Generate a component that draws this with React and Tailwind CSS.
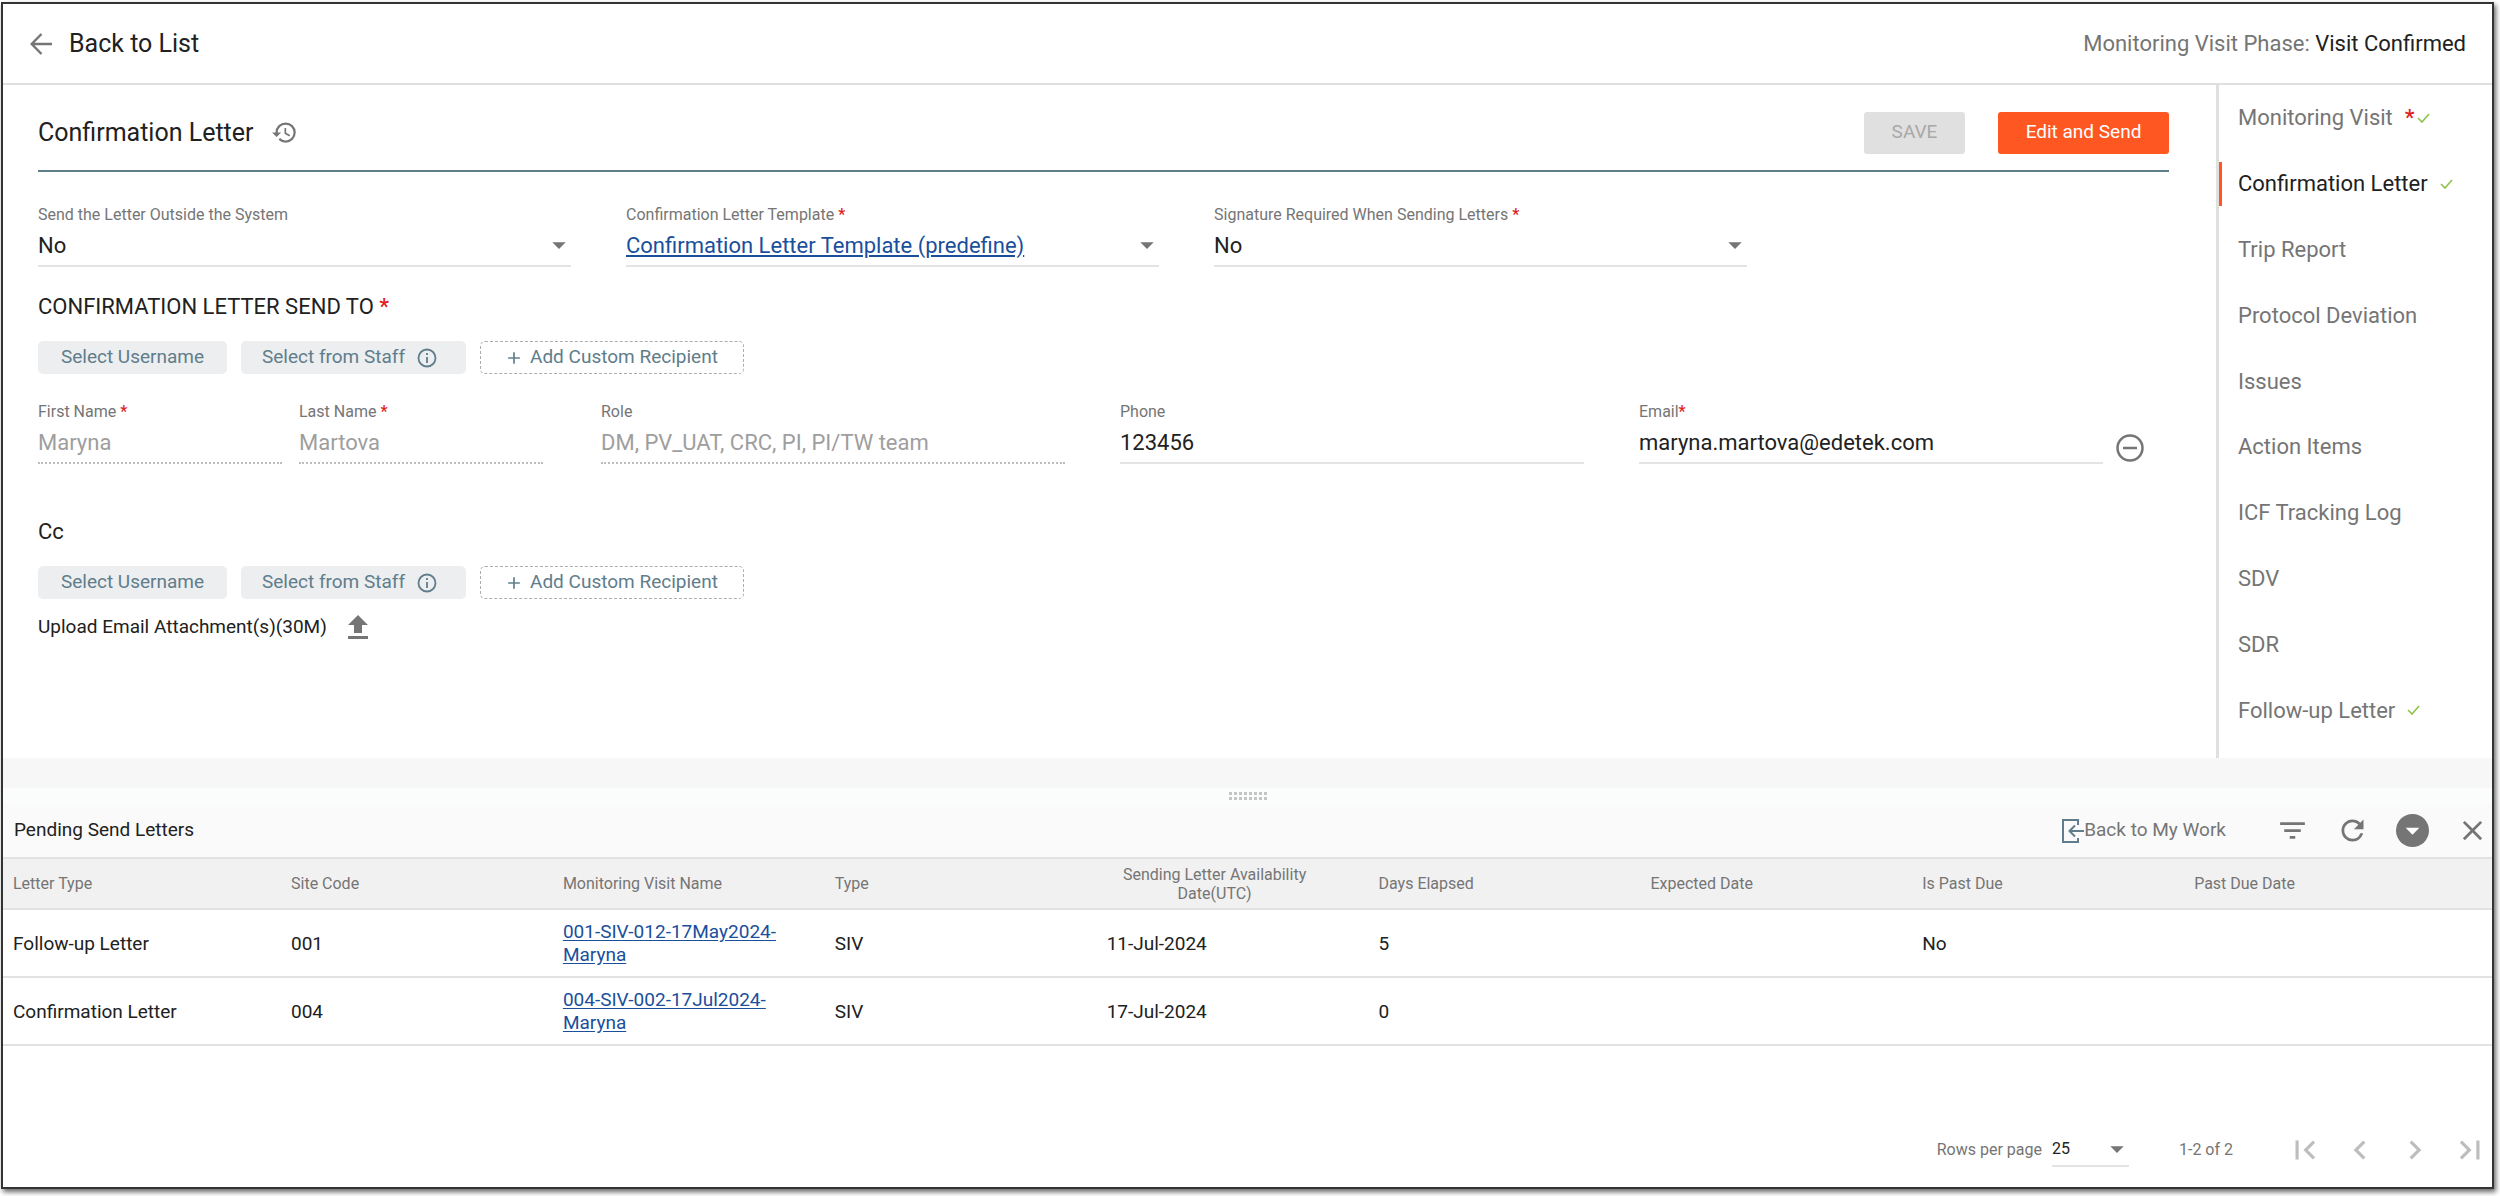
import { MdHistory, MdFilterList, MdRefresh, MdClose, MdFirstPage, MdLastPage, MdChevronLeft, MdChevronRight, MdArrowDropDown, MdAdd } from "react-icons/md";

const steps = [
  { name: "Monitoring Visit", required: true, done: true },
  { name: "Confirmation Letter", active: true, done: true },
  { name: "Trip Report" },
  { name: "Protocol Deviation" },
  { name: "Issues" },
  { name: "Action Items" },
  { name: "ICF Tracking Log" },
  { name: "SDV" },
  { name: "SDR" },
  { name: "Follow-up Letter", done: true },
];

const rows = [
  { type: "Follow-up Letter", site: "001", visit: "001-SIV-012-17May2024-Maryna", kind: "SIV", date: "11-Jul-2024", days: "5", expected: "", past: "No" },
  { type: "Confirmation Letter", site: "004", visit: "004-SIV-002-17Jul2024-Maryna", kind: "SIV", date: "17-Jul-2024", days: "0", expected: "", past: "" },
];

const headers = ["Letter Type", "Site Code", "Monitoring Visit Name", "Type", "Sending Letter Availability Date(UTC)", "Days Elapsed", "Expected Date", "Is Past Due", "Past Due Date"];

function Star() {
  return <span className="font-medium text-[#e02020]">*</span>;
}

function Check() {
  return (
    <svg viewBox="0 0 13 10" className="h-[10px] w-[13px]" fill="none" stroke="#8bc34a" strokeWidth="1.600" aria-hidden="true">
      <path d="M1 5l4 4L12 1" />
    </svg>
  );
}

function BackArrow() {
  return (
    <svg viewBox="0 0 22 22" className="size-[22px]" fill="none" stroke="#757575" strokeWidth="2.400" aria-hidden="true">
      <path d="M22 11H2M11.500 1L1.700 11l9.800 10" />
    </svg>
  );
}

function InfoIcon() {
  return (
    <svg viewBox="0 0 20 20" className="size-5" fill="none" stroke="currentColor" strokeWidth="1.800" aria-hidden="true">
      <circle cx="10" cy="10" r="8.500" />
      <path d="M10 9v6M10 5v2" />
    </svg>
  );
}

function SelectField({ id, label, required, value, link }) {
  return (
    <div>
      <label htmlFor={id} className="block text-[16px] leading-6 text-[#757575]">
        {label} {required && <Star />}
      </label>
      <div className="relative border-b-2 border-[#e4e4e4]">
        <select
          id={id}
          defaultValue={value}
          className={
            "h-[38px] w-full appearance-none bg-transparent pr-8 pb-0.5 text-[22px] outline-none " +
            (link ? "text-[#1a4f9c] underline underline-offset-2" : "text-[#212121]")
          }
        >
          <option>{value}</option>
        </select>
        <MdArrowDropDown className="pointer-events-none absolute top-0.5 -right-1 size-8 text-[#757575]" />
      </div>
    </div>
  );
}

function TextField({ id, label, star, value, disabled, className }) {
  return (
    <div className={className}>
      <label htmlFor={id} className="block text-[16px] leading-6 text-[#757575]">
        {label}
        {star}
      </label>
      <input
        id={id}
        defaultValue={value}
        disabled={disabled}
        className={
          "h-10 w-full border-b-2 bg-transparent pb-0.5 text-[22px] outline-none " +
          (disabled ? "border-dotted border-[#bdbdbd] text-[#9e9e9e]" : "border-[#e4e4e4] text-[#212121]")
        }
      />
    </div>
  );
}

function RecipientButtons() {
  return (
    <div className="flex items-center gap-[14px] text-[19px] text-[#607d8b]">
      <button className="h-[33px] w-[189px] rounded-[5px] bg-[#eceef0]">Select Username</button>
      <button className="flex h-[33px] w-[225px] items-center gap-3 rounded-[5px] bg-[#eceef0] pl-[21px]">
        Select from Staff <InfoIcon />
      </button>
      <button className="flex h-[33px] w-[264px] items-center gap-1.5 rounded-[5px] border border-dashed border-[#adadad] pl-[23px]">
        <MdAdd className="size-5" /> Add Custom Recipient
      </button>
    </div>
  );
}

function Header() {
  return (
    <header className="flex h-[81px] items-center justify-between border-b-2 border-[#e0e0e0] pr-[26px] pl-[27px]">
      <a href="#list" className="flex items-center gap-[17px] text-[25px]">
        <BackArrow /> Back to List
      </a>
      <p className="text-[22px] text-[#757575]">
        Monitoring Visit Phase: <span className="text-[#212121]">Visit Confirmed</span>
      </p>
    </header>
  );
}

function LetterForm() {
  return (
    <main className="flex-1 pr-[47px] pl-[35px]">
      <div className="flex h-[87px] items-center border-b-2 border-[#607d8b] pt-2.5">
        <h1 className="text-[25px]">Confirmation Letter</h1>
        <button aria-label="History" className="ml-[17px]">
          <MdHistory className="size-[27px] text-[#757575]" />
        </button>
        <button disabled className="ml-auto h-[42px] w-[101px] rounded-[3px] bg-[#e0e0e0] text-[19px] text-[#a8a8a8]">SAVE</button>
        <button className="ml-[33px] h-[42px] w-[171px] rounded-[3px] bg-[#ff5722] text-[19px] text-white">Edit and Send</button>
      </div>

      <div className="mt-[31px] mr-[422px] grid grid-cols-3 gap-[55px]">
        <SelectField id="outside" label="Send the Letter Outside the System" value="No" />
        <SelectField id="template" label="Confirmation Letter Template" required value="Confirmation Letter Template (predefine)" link />
        <SelectField id="signature" label="Signature Required When Sending Letters" required value="No" />
      </div>

      <h2 className="mt-6 mb-[18px] text-[22px] leading-8">
        CONFIRMATION LETTER SEND TO <Star />
      </h2>
      <RecipientButtons />

      <div className="mt-[26px] flex items-end">
        <TextField id="first" label="First Name " star={<Star />} value="Maryna" disabled className="mr-[17px] w-[244px]" />
        <TextField id="last" label="Last Name " star={<Star />} value="Martova" disabled className="mr-[58px] w-[244px]" />
        <TextField id="role" label="Role" value="DM, PV_UAT, CRC, PI, PI/TW team" disabled className="mr-[55px] flex-1" />
        <TextField id="phone" label="Phone" value="123456" className="mr-[55px] flex-1" />
        <TextField id="email" label="Email" star={<Star />} value="maryna.martova@edetek.com" className="flex-1" />
        <button aria-label="Remove recipient" className="mr-[25px] mb-0.5 ml-[13px]">
          <svg viewBox="0 0 28 28" className="size-7" fill="none" stroke="#757575" strokeWidth="2.500" aria-hidden="true">
            <circle cx="14" cy="14" r="12.500" />
            <path d="M7 14h14" />
          </svg>
        </button>
      </div>

      <h2 className="mt-[52px] mb-[18px] text-[22px] leading-8">Cc</h2>
      <RecipientButtons />
      <div className="mt-3 flex items-center gap-[21px] text-[19px] leading-8">
        Upload Email Attachment(s)(30M)
        <button aria-label="Upload">
          <svg viewBox="0 0 20 24" className="h-6 w-5" fill="#757575" aria-hidden="true">
            <path d="M10 0L20 10h-6v8H6v-8H0zM0 21h20v3H0z" />
          </svg>
        </button>
      </div>
    </main>
  );
}

function StepNav() {
  return (
    <nav className="flex w-[276px] flex-col border-l-3 border-[#e0e0e0] pb-[15px] text-[22px]">
      {steps.map((s) => (
        <a key={s.name} href="#step" className={"flex flex-1 items-center " + (s.active ? "text-[#212121]" : "text-[#757575]")}>
          <span className={"mr-4 h-11 w-[3px] " + (s.active ? "bg-[#ff5722]" : "")} />
          {s.name}
          <span className="ml-3 flex items-center gap-0.5">
            {s.required && <Star />}
            {s.done && <Check />}
          </span>
        </a>
      ))}
    </nav>
  );
}

function PendingLetters() {
  return (
    <section className="flex flex-1 flex-col">
      <div className="h-[30px] bg-[#f7f7f7]" />
      <div className="flex h-4 items-center justify-center bg-[#fbfdfc]">
        <div className="grid grid-cols-8 gap-0.5">
          {Array.from({ length: 16 }, (_, i) => (
            <span key={i} className="size-[3px] bg-[#c4c4c4]" />
          ))}
        </div>
      </div>
      <div className="flex h-[53px] items-center bg-[#fafafa] pr-[3px] pl-[11px]">
        <h2 className="text-[19px]">Pending Send Letters</h2>
        <a href="#work" className="ml-auto flex items-center text-[19px] text-[#757575]">
          <svg viewBox="0 0 22 24" className="h-6 w-[22px]" fill="none" stroke="#607d8b" strokeWidth="2" aria-hidden="true">
            <path d="M16 6V1H1v22h15v-4M22 12H8M13 6.500L7.500 12l5.500 5.500" />
          </svg>
          Back to My Work
        </a>
        <div className="ml-[50px] flex items-center gap-[27px] text-[#757575]">
          <button aria-label="Filter"><MdFilterList className="size-[33px]" /></button>
          <button aria-label="Refresh"><MdRefresh className="size-[33px]" /></button>
          <button aria-label="More" className="rounded-full bg-[#757575] text-white"><MdArrowDropDown className="size-[33px]" /></button>
          <button aria-label="Close"><MdClose className="size-[33px]" /></button>
        </div>
      </div>
      <table className="w-full table-fixed border-t-2 border-[#e2e2e2] text-left">
        <colgroup>
          <col className="w-[278px]" />
          {headers.slice(1).map((h) => <col key={h} />)}
          <col className="w-9" />
        </colgroup>
        <thead>
          <tr className="h-[51px] border-b-2 border-[#e2e2e2] bg-[#f1f1f1] text-[16px] leading-[19px] text-[#757575]">
            {headers.map((h) => (
              <th key={h} className={"pr-[46px] pl-[10px] font-normal " + (h.startsWith("Sending") ? "text-center" : "")}>{h}</th>
            ))}
            <td />
          </tr>
        </thead>
        <tbody>
          {rows.map((r) => (
            <tr key={r.site} className="h-[68px] border-b-2 border-[#e2e2e2] text-[19px] leading-[23px]">
              <td className="pl-[10px]">{r.type}</td>
              <td className="pl-[10px]">{r.site}</td>
              <td className="pr-[46px] pl-[10px]"><a href="#visit" className="text-[#1a4f9c] underline underline-offset-2">{r.visit}</a></td>
              <td className="pl-[10px]">{r.kind}</td>
              <td className="pl-[10px]">{r.date}</td>
              <td className="pl-[10px]">{r.days}</td>
              <td className="pl-[10px]">{r.expected}</td>
              <td className="pl-[10px]">{r.past}</td>
              <td />
              <td />
            </tr>
          ))}
        </tbody>
      </table>
      <div className="mt-auto flex h-[75px] items-center justify-end pr-[3px] text-[16px] text-[#757575]">
        <label htmlFor="rpp" className="mr-2.5">Rows per page</label>
        <div className="relative w-[77px] border-b-2 border-[#e4e4e4]">
          <select id="rpp" defaultValue="25" className="h-8 w-full appearance-none bg-transparent text-[#212121] outline-none">
            <option>25</option>
          </select>
          <MdArrowDropDown className="pointer-events-none absolute top-0 -right-1 size-8" />
        </div>
        <span className="mr-[53px] ml-[50px]">1-2 of 2</span>
        <div className="flex items-center gap-[17px] text-[#bdbdbd]">
          <button aria-label="First page"><MdFirstPage className="size-[38px]" /></button>
          <button aria-label="Previous page"><MdChevronLeft className="size-[38px]" /></button>
          <button aria-label="Next page"><MdChevronRight className="size-[38px]" /></button>
          <button aria-label="Last page"><MdLastPage className="size-[38px]" /></button>
        </div>
      </div>
    </section>
  );
}

export default function App() {
  return (
    <div className="flex min-h-screen bg-white pt-0.5 pr-1.5 pb-[7px] pl-px font-[Roboto,sans-serif] text-[#212121]">
      <div className="flex flex-1 flex-col border-2 border-[#333] shadow-[2px_3px_5px_rgba(0,0,0,0.6)]">
        <Header />
        <div className="flex min-h-[673px]">
          <LetterForm />
          <StepNav />
        </div>
        <PendingLetters />
      </div>
    </div>
  );
}
